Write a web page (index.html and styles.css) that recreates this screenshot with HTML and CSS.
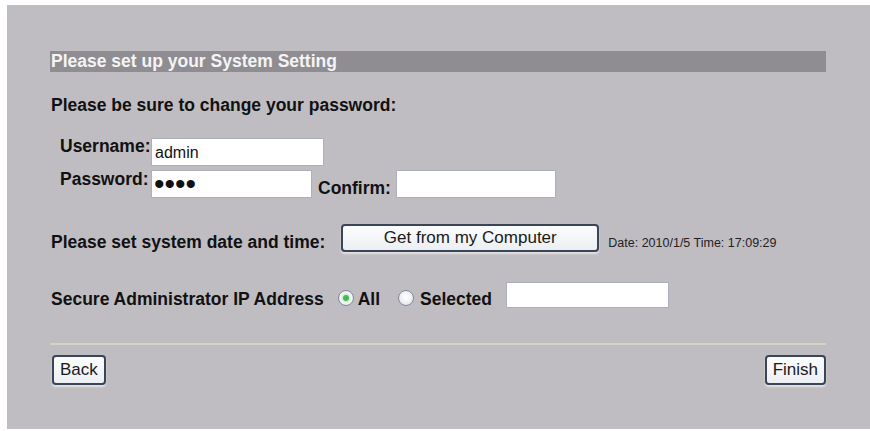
FILE: index.html
```html
<!DOCTYPE html>
<html>
<head>
<meta charset="utf-8">
<link rel="stylesheet" href="styles.css">
</head>
<body>
<div class="panel">
  <div class="title">Please set up your System Setting</div>
  <div class="note">Please be sure to change your password:</div>
  <div class="creds">
    <div class="row user-row">
      <label class="lbl lbl-fixed">Username:</label>
      <input class="field user" type="text" value="admin">
    </div>
    <div class="row pass-row">
      <label class="lbl lbl-fixed">Password:</label>
      <input class="field pass" type="password" value="1234">
      <label class="lbl confirm">Confirm:</label>
      <input class="field conf" type="password" value="">
    </div>
  </div>
  <div class="row date-row">
    <span class="lbl">Please set system date and time:</span>
    <button class="btn get">Get from my Computer</button>
    <span class="stamp">Date: 2010/1/5 Time: 17:09:29</span>
  </div>
  <div class="row ip-row">
    <span class="lbl">Secure Administrator IP Address</span>
    <input class="radio r-all" type="radio" name="ip" checked>
    <span class="lbl opt-all">All</span>
    <input class="radio r-sel" type="radio" name="ip">
    <span class="lbl opt-sel">Selected</span>
    <input class="field ip" type="text" value="">
  </div>
  <div class="sep"></div>
  <div class="actions">
    <button class="btn nav">Back</button>
    <button class="btn nav">Finish</button>
  </div>
</div>
</body>
</html>
```
FILE: styles.css
```css
html, body {
  margin: 0;
  padding: 0;
  background: #ffffff;
}
body {
  font-family: "Liberation Sans", Arial, sans-serif;
  color: #111;
}
.panel {
  margin: 5px 0 0 7px;
  width: 863px;
  height: 424px;
  box-sizing: border-box;
  padding: 46px 44px 0 43px;
  background: #c0bdc2;
}
.title {
  height: 21px;
  line-height: 21px;
  background: #8f8d92;
  color: #f4f4f4;
  font-weight: bold;
  font-size: 17.5px;
  padding-left: 1px;
  white-space: nowrap;
}
.note {
  margin-top: 23px;
  line-height: 20px;
  font-size: 17.5px;
  font-weight: bold;
  padding-left: 1px;
  white-space: nowrap;
}
.row {
  display: flex;
  align-items: flex-start;
}
.lbl {
  font-size: 17.5px;
  font-weight: bold;
  line-height: 20px;
  white-space: nowrap;
}
.creds {
  margin-left: 10px;
}
.lbl-fixed {
  width: 91px;
  flex: none;
}
.user-row {
  margin-top: 21px;
}
.field {
  box-sizing: border-box;
  border: 1px solid #aab1ba;
  background: #fff;
  font-family: "Liberation Sans", Arial, sans-serif;
  font-size: 16px;
  color: #111;
  padding: 2px 3px 0;
  margin: 0;
  outline: none;
  border-radius: 0;
}
.user {
  width: 173px;
  height: 28px;
  margin-top: 2px;
}
.pass-row {
  margin-top: 3px;
}
.pass {
  width: 161px;
  height: 28px;
  margin-top: 1px;
  font-size: 30px;
  line-height: 26px;
  letter-spacing: 0;
  padding: 0 2px;
}
.confirm {
  margin-left: 6px;
  margin-top: 9px;
}
.conf {
  width: 160px;
  height: 28px;
  margin-left: 5px;
  margin-top: 1px;
}
.date-row {
  margin-top: 26px;
  padding-left: 1px;
}
.date-row .lbl {
  margin-top: 8px;
}
.btn {
  font-family: "Liberation Sans", Arial, sans-serif;
  font-size: 17px;
  color: #1a1a1a;
  border: 2px solid #3a4658;
  border-radius: 4px;
  background: linear-gradient(#fbfcfd, #eceff3);
  box-shadow: 0 2px 2px rgba(255, 255, 255, 0.55);
  padding: 0;
  margin: 0;
  cursor: pointer;
}
.get {
  width: 258px;
  height: 28px;
  margin-left: 16px;
}
.stamp {
  font-size: 12.5px;
  line-height: 14px;
  color: #222;
  margin-left: 9px;
  margin-top: 12px;
  white-space: nowrap;
}
.ip-row {
  margin-top: 30px;
  padding-left: 1px;
}
.ip-row .lbl {
  margin-top: 7px;
}
.radio {
  appearance: none;
  -webkit-appearance: none;
  width: 16px;
  height: 16px;
  box-sizing: border-box;
  border-radius: 50%;
  border: 1px solid #7f8da0;
  background: radial-gradient(circle at 50% 45%, #ffffff 0, #f2f3f5 45%, #d3d8df 100%);
  margin: 8px 0 0 0;
  flex: none;
}
.radio:checked {
  background: radial-gradient(circle at 50% 50%, #36b34a 0, #4cc05c 2.6px, #d7efd9 3.6px, #f4f5f6 55%, #d3d8df 100%);
}
.r-all {
  margin-left: 14px;
}
.opt-all {
  margin-left: 4px;
}
.r-sel {
  margin-left: 18px;
}
.opt-sel {
  margin-left: 6px;
}
.ip {
  width: 163px;
  height: 26px;
  margin-left: 14px;
}
.sep {
  margin-top: 34px;
  height: 2px;
  background: #d7d3c3;
}
.actions {
  margin-top: 10px;
  display: flex;
  justify-content: space-between;
  padding-left: 2px;
}
.nav {
  height: 30px;
  padding: 0 6px;
}
```
